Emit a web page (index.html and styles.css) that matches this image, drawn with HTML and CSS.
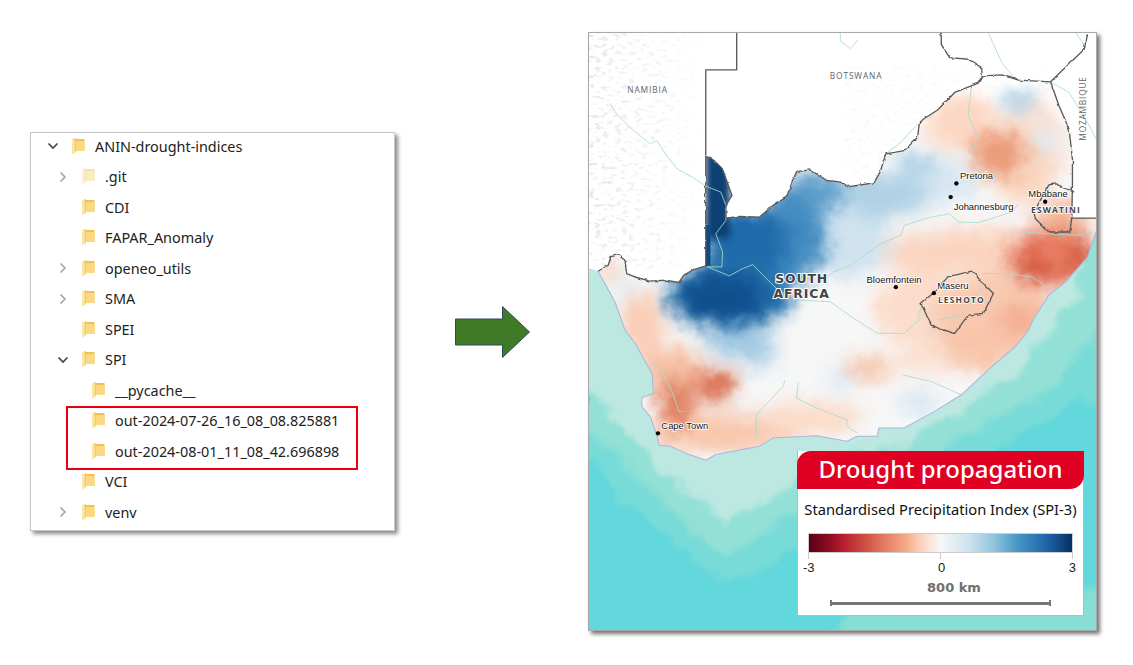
FILE: index.html
```html
<!DOCTYPE html>
<html lang="en">
<head>
<meta charset="utf-8">
<title>Drought indices</title>
<link rel="stylesheet" href="styles.css">
</head>
<body>
<svg class="defs" width="0" height="0" aria-hidden="true">
  <defs>
    <symbol id="folder" viewBox="0 0 13 17">
      <path d="M2 1H12.500V13H2Z" fill="#f0bf55"/>
      <path d="M3 3H12.500V13H3Z" fill="#fbd983"/>
      <path d="M0 1.200 3.200 0V14.600L.6 16.600 0 16Z" fill="#fde6a2"/>
      <path d="M3.200 0V14.600" stroke="#ecbf5c" stroke-width=".8"/>
    </symbol>
    <symbol id="open" viewBox="0 0 12 10"><path d="M1.500 2.500 6 7l4.500-4.500" fill="none" stroke="#454545" stroke-width="1.700"/></symbol>
    <symbol id="closed" viewBox="0 0 10 12"><path d="M2.500 1.500 7 6l-4.500 4.500" fill="none" stroke="#a6a6a6" stroke-width="1.700"/></symbol>
  </defs>
</svg>
<main class="stage">
  <section class="tree">
    <div class="row lvl0"><svg class="chev"><use href="#open"/></svg><svg class="folder"><use href="#folder"/></svg><span>ANIN-drought-indices</span></div>
    <div class="row lvl1"><svg class="chev"><use href="#closed"/></svg><svg class="folder faded"><use href="#folder"/></svg><span>.git</span></div>
    <div class="row lvl1"><i class="chev"></i><svg class="folder"><use href="#folder"/></svg><span>CDI</span></div>
    <div class="row lvl1"><i class="chev"></i><svg class="folder"><use href="#folder"/></svg><span>FAPAR_Anomaly</span></div>
    <div class="row lvl1"><svg class="chev"><use href="#closed"/></svg><svg class="folder"><use href="#folder"/></svg><span>openeo_utils</span></div>
    <div class="row lvl1"><svg class="chev"><use href="#closed"/></svg><svg class="folder"><use href="#folder"/></svg><span>SMA</span></div>
    <div class="row lvl1"><i class="chev"></i><svg class="folder"><use href="#folder"/></svg><span>SPEI</span></div>
    <div class="row lvl1"><svg class="chev"><use href="#open"/></svg><svg class="folder"><use href="#folder"/></svg><span>SPI</span></div>
    <div class="row lvl2"><i class="chev"></i><svg class="folder"><use href="#folder"/></svg><span>__pycache__</span></div>
    <div class="picked">
      <div class="row lvl2"><i class="chev"></i><svg class="folder"><use href="#folder"/></svg><span>out-2024-07-26_16_08_08.825881</span></div>
      <div class="row lvl2"><i class="chev"></i><svg class="folder"><use href="#folder"/></svg><span>out-2024-08-01_11_08_42.696898</span></div>
      <div class="redbox"></div>
    </div>
    <div class="row lvl1"><i class="chev"></i><svg class="folder"><use href="#folder"/></svg><span>VCI</span></div>
    <div class="row lvl1"><svg class="chev"><use href="#closed"/></svg><svg class="folder"><use href="#folder"/></svg><span>venv</span></div>
  </section>

  <svg class="arrow" viewBox="0 0 76 54" width="76" height="54"><path d="M.5 14H47.500V1.500L74.500 27 47.500 52.500V40H.5Z" fill="#3f7a26" stroke="#2c4a5e"/></svg>

  <figure class="map">
    <svg class="mapart" viewBox="23 21 1507 1797" width="507" height="597" preserveAspectRatio="none">
      <defs>
        <clipPath id="sa"><path d="M50 738 80 720 88 695 108 688 130 705 135 745 165 757 205 768 250 765 290 772 305 750 330 735 370 722V388L395 405 420 430 432 465 448 510 430 540 430 578 470 573 530 575 570 540 610 515 625 475 640 438 680 433 730 465 770 470 800 483 870 472 888 440 905 385 960 375 1000 335 1005 288 1060 252 1110 200 1180 172 1192 150 1250 147 1300 163 1395 168 1420 240 1450 310 1460 400 1460 480 1458 578H1535L1530 620 1505 695 1440 770 1390 810 1345 880 1330 915 1290 965 1220 1025 1130 1110 1050 1160 960 1210 885 1210 880 1235 820 1235 790 1250 700 1233 570 1240 530 1265 400 1290 370 1307 320 1290 265 1265 232 1262 222 1225 205 1175 180 1145 180 1120 215 1105 210 1045 160 955 130 915 100 830Z"/></clipPath>
        <filter id="soft" filterUnits="userSpaceOnUse" x="0" y="0" width="1600" height="1850"><feGaussianBlur stdDeviation="9"/></filter>
        <filter id="sea" filterUnits="userSpaceOnUse" x="0" y="0" width="1600" height="1850" color-interpolation-filters="sRGB">
          <feGaussianBlur stdDeviation="10" result="b"/>
          <feTurbulence type="fractalNoise" baseFrequency=".012" numOctaves="4" seed="7" result="n"/>
          <feDisplacementMap in="b" in2="n" scale="70" xChannelSelector="R" yChannelSelector="G"/>
        </filter>
        <filter id="heat" filterUnits="userSpaceOnUse" x="0" y="0" width="1600" height="1850" color-interpolation-filters="sRGB">
          <feGaussianBlur stdDeviation="27" result="b"/>
          <feTurbulence type="fractalNoise" baseFrequency=".022" numOctaves="3" seed="4" result="n"/>
          <feDisplacementMap in="b" in2="n" scale="45" xChannelSelector="R" yChannelSelector="G"/>
        </filter>
        <filter id="jag" filterUnits="userSpaceOnUse" x="0" y="0" width="1600" height="1850" color-interpolation-filters="sRGB">
          <feTurbulence type="fractalNoise" baseFrequency=".05" numOctaves="2" seed="2" result="n"/>
          <feDisplacementMap in="SourceGraphic" in2="n" scale="9" xChannelSelector="R" yChannelSelector="G"/>
        </filter>
        <filter id="relief" filterUnits="userSpaceOnUse" x="0" y="0" width="1600" height="1850" color-interpolation-filters="sRGB">
          <feTurbulence type="fractalNoise" baseFrequency=".05 .09" numOctaves="4" seed="9"/>
          <feColorMatrix values="0 0 0 0 .5  0 0 0 0 .5  0 0 0 0 .5  5 0 0 0 -2.700"/>
          <feComposite in2="SourceAlpha" operator="in"/>
          <feGaussianBlur stdDeviation="1.500"/>
        </filter>
        <linearGradient id="fade" x1="0" x2="1" y1="0" y2="0"><stop offset="0" stop-color="#000"/><stop offset=".6" stop-color="#000" stop-opacity=".45"/><stop offset="1" stop-color="#000" stop-opacity="0"/></linearGradient>
      </defs>

      <rect x="0" y="0" width="1600" height="1850" fill="#62d7dc"/>
      <g filter="url(#sea)">
        <path d="M720 1880 800 1760 1100 1720 1600 1680V1880Z" fill="#86ded5"/>
        <path d="M1600 1100 1400 1180 1200 1290 1000 1390 700 1560 430 1680 200 1500 -50 1240V600H1600Z" fill="#78dbd8"/>
        <path d="M1600 800 1420 1080 1130 1240 900 1360 600 1480 430 1600 240 1430 90 1280 -50 1120V600H1600Z" fill="#93e0d6"/>
        <path d="M1480 820 1330 1000 1130 1160 950 1260 800 1290 600 1400 430 1500 240 1350 120 1200 -50 1050V700H1480Z" fill="#bde8e1"/>
      </g>
      <path d="M0 0H1600V590L1000 800 300 800 100 760 50 738 0 722Z" fill="#fff"/>
      <rect x="0" y="21" width="370" height="710" fill="url(#fade)" filter="url(#relief)" opacity=".2"/>
      <rect x="780" y="120" width="750" height="330" fill="url(#fade)" filter="url(#relief)" opacity=".05"/>

      <g clip-path="url(#sa)">
        <rect x="0" y="300" width="1600" height="1100" fill="#f7f7f7"/>
        <g filter="url(#heat)">
          <ellipse cx="1000" cy="850" rx="130" ry="120" fill="#fcdccb"/>
          <ellipse cx="1180" cy="680" rx="290" ry="70" fill="#fad4bf"/>
          <ellipse cx="1230" cy="880" rx="190" ry="130" fill="#f8c9b0"/>
          <ellipse cx="1430" cy="590" rx="80" ry="60" fill="#f3b598"/>
          <ellipse cx="1390" cy="700" rx="120" ry="85" fill="#e6755c"/>
          <ellipse cx="1350" cy="730" rx="55" ry="35" fill="#d2553f"/>
          <ellipse cx="1480" cy="700" rx="50" ry="70" fill="#d85e46"/>
          <ellipse cx="1415" cy="700" rx="25" ry="22" fill="#f2a787"/>
          <ellipse cx="1300" cy="885" rx="70" ry="45" fill="#f3ae90"/>
          <ellipse cx="1130" cy="290" rx="110" ry="90" fill="#fcd8c4"/>
          <ellipse cx="1340" cy="350" rx="100" ry="150" fill="#fbe2d5"/>
          <ellipse cx="1320" cy="430" rx="90" ry="110" fill="#fbd6c1"/>
          <ellipse cx="1240" cy="385" rx="80" ry="75" fill="#eb9c7b"/>
          <ellipse cx="1300" cy="225" rx="55" ry="30" fill="#a8cce3"/>
          <ellipse cx="1380" cy="350" rx="35" ry="45" fill="#dde9f2"/>
          <ellipse cx="1050" cy="470" rx="130" ry="70" fill="#d8e7f1"/>
          <ellipse cx="1000" cy="415" rx="65" ry="30" fill="#a9cee4"/>
          <ellipse cx="860" cy="510" rx="180" ry="70" fill="#b0d1e5"/>
          <ellipse cx="845" cy="575" rx="60" ry="40" fill="#a6cbe2"/>
          <ellipse cx="780" cy="650" rx="130" ry="110" fill="#cfe2ee"/>
          <ellipse cx="690" cy="500" rx="90" ry="65" fill="#5f9fcb"/>
          <ellipse cx="610" cy="640" rx="115" ry="135" fill="#428bc0"/>
          <ellipse cx="490" cy="650" rx="125" ry="105" fill="#1f6aaa"/>
          <ellipse cx="440" cy="810" rx="190" ry="105" fill="#2472ae"/>
          <ellipse cx="420" cy="815" rx="130" ry="70" fill="#0f4f8e"/>
          <ellipse cx="470" cy="955" rx="110" ry="35" fill="#9cc7e1"/>
          <ellipse cx="520" cy="1000" rx="55" ry="30" fill="#aed0e6"/>
          <ellipse cx="120" cy="790" rx="45" ry="50" fill="#e6eff5"/>
          <ellipse cx="85" cy="735" rx="30" ry="28" fill="#fac9ae"/>
          <ellipse cx="180" cy="900" rx="70" ry="100" fill="#f9cfb8"/>
          <ellipse cx="270" cy="1040" rx="95" ry="75" fill="#f6c0a5"/>
          <ellipse cx="420" cy="1225" rx="230" ry="60" fill="#f8c7ad"/>
          <ellipse cx="285" cy="1135" rx="55" ry="75" fill="#e07f5f"/>
          <ellipse cx="400" cy="1080" rx="60" ry="50" fill="#d96f50"/>
          <ellipse cx="850" cy="1030" rx="70" ry="35" fill="#f6c2a7"/>
          <ellipse cx="1190" cy="970" rx="130" ry="70" fill="#f8c5ab"/>
          <ellipse cx="1010" cy="1010" rx="90" ry="35" fill="#fbdfcf"/>
          <ellipse cx="680" cy="1180" rx="160" ry="50" fill="#fbdbc9"/>
          <ellipse cx="770" cy="1060" rx="35" ry="40" fill="#d8e7f2"/>
          <ellipse cx="1000" cy="1135" rx="60" ry="35" fill="#d5e5f1"/>
        </g>
        <rect x="370" y="380" width="72" height="260" fill="#0b3f73" filter="url(#soft)"/>
        <rect x="370" y="600" width="14" height="122" fill="#0f4a83"/>
      </g>

      <g class="rivers">
        <path d="M770 21 770 45 800 68 822 42"/>
        <path d="M85 232 105 265 150 310 205 355 225 345 250 385 285 430 330 455 370 482 415 500 430 540 430 585 400 625 420 680 418 725 375 725 440 752 480 730 510 718 540 750 590 800 650 825 740 830 810 880 880 925 960 925 1010 880"/>
        <path d="M1210 21 1250 110 1290 160M1395 168 1450 200 1510 300 1530 340M1470 21 1500 65"/>
        <path d="M905 385 950 350 1000 295M1160 180 1150 270 1180 340 1150 380"/>
        <path d="M1300 535 1280 560 1180 592 1120 590 1095 565 1040 575 960 600 950 630 890 655 800 720 750 740 700 780 640 825"/>
        <path d="M1190 745 1260 745 1340 755 1390 790M1310 620 1380 625 1470 630 1520 620"/>
        <path d="M1010 845 1000 880M1060 885 1130 870 1190 790"/>
        <path d="M210 1010 240 1040 270 1100 290 1160 302 1160M605 1067 600 1085 520 1170 520 1240M645 1072 640 1120 700 1150 790 1185 790 1205 820 1225M955 1050 1040 1070 1130 1110"/>
      </g>
      <path class="coast" d="M1530 620 1505 695 1440 770 1390 810 1345 880 1330 915 1290 965 1220 1025 1130 1110 1050 1160 960 1210 885 1210 880 1235 820 1235 790 1250 700 1233 570 1240 530 1265 400 1290 370 1307 320 1290 265 1265 232 1262 222 1225 205 1175 180 1145 180 1120 215 1105 210 1045 160 955 130 915 100 830 50 738"/>
      <g class="borders" filter="url(#jag)">
        <path d="M50 738 80 720 88 695 108 688 130 705 135 745 165 757 205 768 250 765 290 772 305 750 330 735 370 722V388M430 578 470 573 530 575 570 540 610 515 625 475 640 438 680 433 730 465 770 470 800 483 870 472 888 440 905 385 960 375 1000 335 1005 288 1060 252 1110 200 1180 172 1192 150 1250 147 1300 163 1395 168 1420 240 1450 310 1460 400 1460 480 1458 578"/>
        <path d="M370 388 395 405 420 430 432 465 448 510 430 540 430 578M1070 21 1070 55 1095 95 1150 100 1190 125 1192 150M1395 168 1495 70 1505 25"/>
        <path d="M1345 560 1390 478 1410 475 1465 500M1458 578 1452 620 1390 620 1350 580 1345 560"/>
        <path d="M1010 835 1045 805 1090 755 1160 738 1225 805 1195 865 1150 870 1110 925 1075 915 1040 900 1010 835Z"/>
      </g>
      <g class="borders">
        <path d="M370 388V132H462V21M1458 578H1530"/>
      </g>

      <g class="dots">
        <circle cx="1115" cy="474" r="6.500"/><circle cx="1098" cy="515" r="6.500"/><circle cx="1379" cy="529" r="6.500"/>
        <circle cx="935" cy="786" r="6.500"/><circle cx="1048" cy="804" r="6.500"/><circle cx="228" cy="1226" r="6.500"/>
      </g>
      <g class="city">
        <text x="1126" y="460">Pretoria</text>
        <text x="1107" y="555">Johannesburg</text>
        <text x="1329" y="516">Mbabane</text>
        <text x="848" y="773">Bloemfontein</text>
        <text x="1058" y="793">Maseru</text>
        <text x="238" y="1214">Cape Town</text>
      </g>
      <g class="neighbor">
        <text x="197" y="203">NAMIBIA</text>
        <text x="817" y="160">BOTSWANA</text>
        <text transform="translate(1500 248) rotate(-90)">MOZAMBIQUE</text>
      </g>
      <g class="small-country">
        <text x="1411" y="563">ESWATINI</text>
        <text x="1130" y="834">LESHOTO</text>
      </g>
      <g class="country">
        <text x="655" y="773">SOUTH</text>
        <text x="655" y="820">AFRICA</text>
      </g>
    </svg>

    <figcaption class="legend">
      <h2 class="legend-head">Drought propagation</h2>
      <p class="legend-sub">Standardised Precipitation Index (SPI-3)</p>
      <div class="bar"></div>
      <div class="marks"><i></i><i></i><i></i></div>
      <div class="ticks"><span>-3</span><span>0</span><span>3</span></div>
      <div class="scale-label">800 km</div>
      <div class="scale"></div>
    </figcaption>
  </figure>
</main>
</body>
</html>
```

FILE: styles.css
```css
* { box-sizing: border-box; }
html, body { margin: 0; height: 100%; background: #fff; }
.defs { position: absolute; }
.stage { display: flex; align-items: center; padding: 32px 0 0 30px; font-family: "Noto Sans", "Open Sans", sans-serif; }

/* folder tree */
.tree { width: 365px; height: 399px; border: 1px solid #c8c8c8; background: #fff; box-shadow: 3px 3px 4px rgba(0, 0, 0, .45); flex: none; display: flex; flex-direction: column; padding: 0; }
.row { display: flex; align-items: center; height: 30.5px; font-size: 14.4px; color: #222; white-space: nowrap; flex: none; }
.lvl0 { padding-left: 16px; margin-top: -2px; }
.lvl1 { padding-left: 26px; }
.lvl2 { padding-left: 36px; }
.chev { display: block; width: 12px; height: 12px; margin-right: 13px; flex: none; }
.folder { display: block; width: 13px; height: 17px; margin-right: 10px; flex: none; }
.faded { opacity: .5; }
.picked { position: relative; flex: none; }
.redbox { position: absolute; left: 35px; top: 0; width: 292px; height: 64px; border: 2px solid #e8000f; }

/* arrow */
.arrow { display: block; flex: none; margin-left: 60px; margin-right: 57px; }

/* map */
.map { position: relative; margin: 0; width: 509px; height: 599px; flex: none; border: 1px solid #a9a9a9; box-shadow: 3px 3px 4px rgba(0, 0, 0, .55); }
.mapart { display: block; }
.rivers path { fill: none; stroke: #a3dccf; stroke-width: 2.500; }
.coast { fill: none; stroke: #a7b6dc; stroke-width: 3; }
.borders path { fill: none; stroke: #5a5a5a; stroke-width: 4; stroke-linejoin: round; }
.dots circle { fill: #000; }
.city text { font: 28px "Liberation Sans", sans-serif; fill: #111; stroke: #fff; stroke-width: 5px; paint-order: stroke; }
.neighbor text { font: 25px "Open Sans", sans-serif; letter-spacing: 2.500px; text-anchor: middle; fill: #666; }
.small-country text { font: 700 25px "Open Sans", sans-serif; letter-spacing: 3.500px; text-anchor: middle; fill: #444; stroke: #fff; stroke-width: 5px; paint-order: stroke; }
.country text { font: 700 37px "DejaVu Sans", sans-serif; letter-spacing: 2.500px; text-anchor: middle; fill: #444; stroke: #fff; stroke-width: 6px; paint-order: stroke; }

/* legend */
.legend { position: absolute; left: 208px; top: 418px; width: 287px; height: 165px; background: #fff; border: 1px solid #bdb6bd; border-top: 0; display: flex; flex-direction: column; align-items: stretch; }
.legend-head { margin: 0 -1px; height: 38px; background: #e00022; color: #fff; border-radius: 14px 0 14px 0; font: 500 24px/36px "Noto Sans", sans-serif; text-align: center; }
.legend-sub { margin: 10px 0 0; font: 14.700px/20px "Noto Sans", sans-serif; color: #111; text-align: center; white-space: nowrap; }
.bar { margin: 14px 10px 0; height: 20px; border: 1px solid #ccc; background: linear-gradient(90deg, #5a0018 0, #8f0f22 8%, #b2182b 12%, #d6604d 24%, #f4a582 36%, #fddbc7 44%, #f7f7f7 50%, #d1e5f0 60%, #92c5de 70%, #4393c3 80%, #2166ac 90%, #053061 100%); }
.marks { display: flex; justify-content: space-between; margin: 0 10px; height: 6px; }
.marks i { width: 1px; background: #ccc; }
.ticks { display: flex; justify-content: space-between; margin: 1px 7px 0 5px; font: 13px/16px "Liberation Sans", sans-serif; color: #222; }
.scale-label { margin: 4px 0 0 27px; font: 700 13px/16px "DejaVu Sans", sans-serif; color: #707070; text-align: center; }
.scale { margin: 4px 32px 0; height: 6px; border-left: 2px solid #777; border-right: 2px solid #777; background: linear-gradient(#777, #777) center / 100% 3px no-repeat; }
```
